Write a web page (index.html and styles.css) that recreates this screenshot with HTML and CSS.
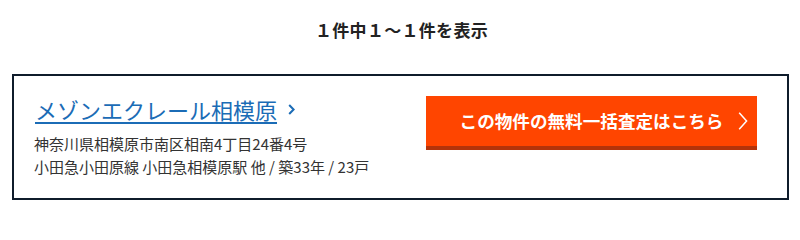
FILE: index.html
```html
<!DOCTYPE html>
<html lang="ja">
<head>
<meta charset="utf-8">
<link rel="stylesheet" href="styles.css">
</head>
<body>
<div class="page">
  <p class="count">１件中１～１件を表示</p>
  <div class="card">
    <div class="info">
      <div class="title-row">
        <a class="title" href="#">メゾンエクレール相模原</a>
        <svg class="title-chev" width="7" height="11" viewBox="0 0 7 11"><path d="M1.2 1 L5.6 5.5 L1.2 10" fill="none" stroke="#1b6cb6" stroke-width="2"/></svg>
      </div>
      <p class="meta">神奈川県相模原市南区相南4丁目24番4号</p>
      <p class="meta">小田急小田原線 小田急相模原駅 他 / 築33年 / 23戸</p>
    </div>
    <a class="cta" href="#">
      <span class="cta-text">この物件の無料一括査定はこちら</span>
      <svg class="cta-chev" width="10" height="18" viewBox="0 0 10 18"><path d="M1.2 0.8 L8.6 9 L1.2 17.2" fill="none" stroke="#ffffff" stroke-width="1.5"/></svg>
    </a>
  </div>
</div>
</body>
</html>
```

FILE: styles.css
```css
* { box-sizing: border-box; }
html, body { margin: 0; padding: 0; background: #ffffff; }
body {
  font-family: "Noto Sans CJK JP", "Noto Sans", sans-serif;
  color: #333333;
}
.page {
  width: 800px;
  padding: 18px 11px 0 12px;
}
.count {
  margin: 0;
  text-align: center;
  font-size: 17px;
  line-height: 24px;
  font-weight: 700;
  color: #222222;
  letter-spacing: 0.3px;
  padding-left: 2px;
}
.card {
  margin-top: 32px;
  height: 126px;
  border: 2px solid #0f1c2b;
  padding: 20px 30px 20px 20px;
  display: flex;
  justify-content: space-between;
  align-items: flex-start;
}
.info {
  display: flex;
  flex-direction: column;
}
.title-row {
  display: flex;
  align-items: center;
  gap: 11px;
  height: 26px;
  margin-bottom: 10px;
}
.title {
  font-size: 22px;
  line-height: 26px;
  color: #1b6cb6;
  text-decoration: underline;
  text-decoration-thickness: 2px;
  text-underline-offset: 3px;
  padding-left: 1px;
}
.title-chev { display: block; margin-top: 1px; }
.meta {
  margin: 0;
  font-size: 15px;
  line-height: 23px;
  color: #333333;
}
.cta {
  position: relative;
  display: flex;
  align-items: center;
  justify-content: center;
  width: 331px;
  height: 54px;
  background: #ff4500;
  border-bottom: 4px solid #b3330a;
  text-decoration: none;
}
.cta-text {
  color: #ffffff;
  font-size: 17.6px;
  font-weight: 700;
  line-height: 24px;
}
.cta-chev {
  position: absolute;
  right: 9px;
  top: 16px;
}
```
